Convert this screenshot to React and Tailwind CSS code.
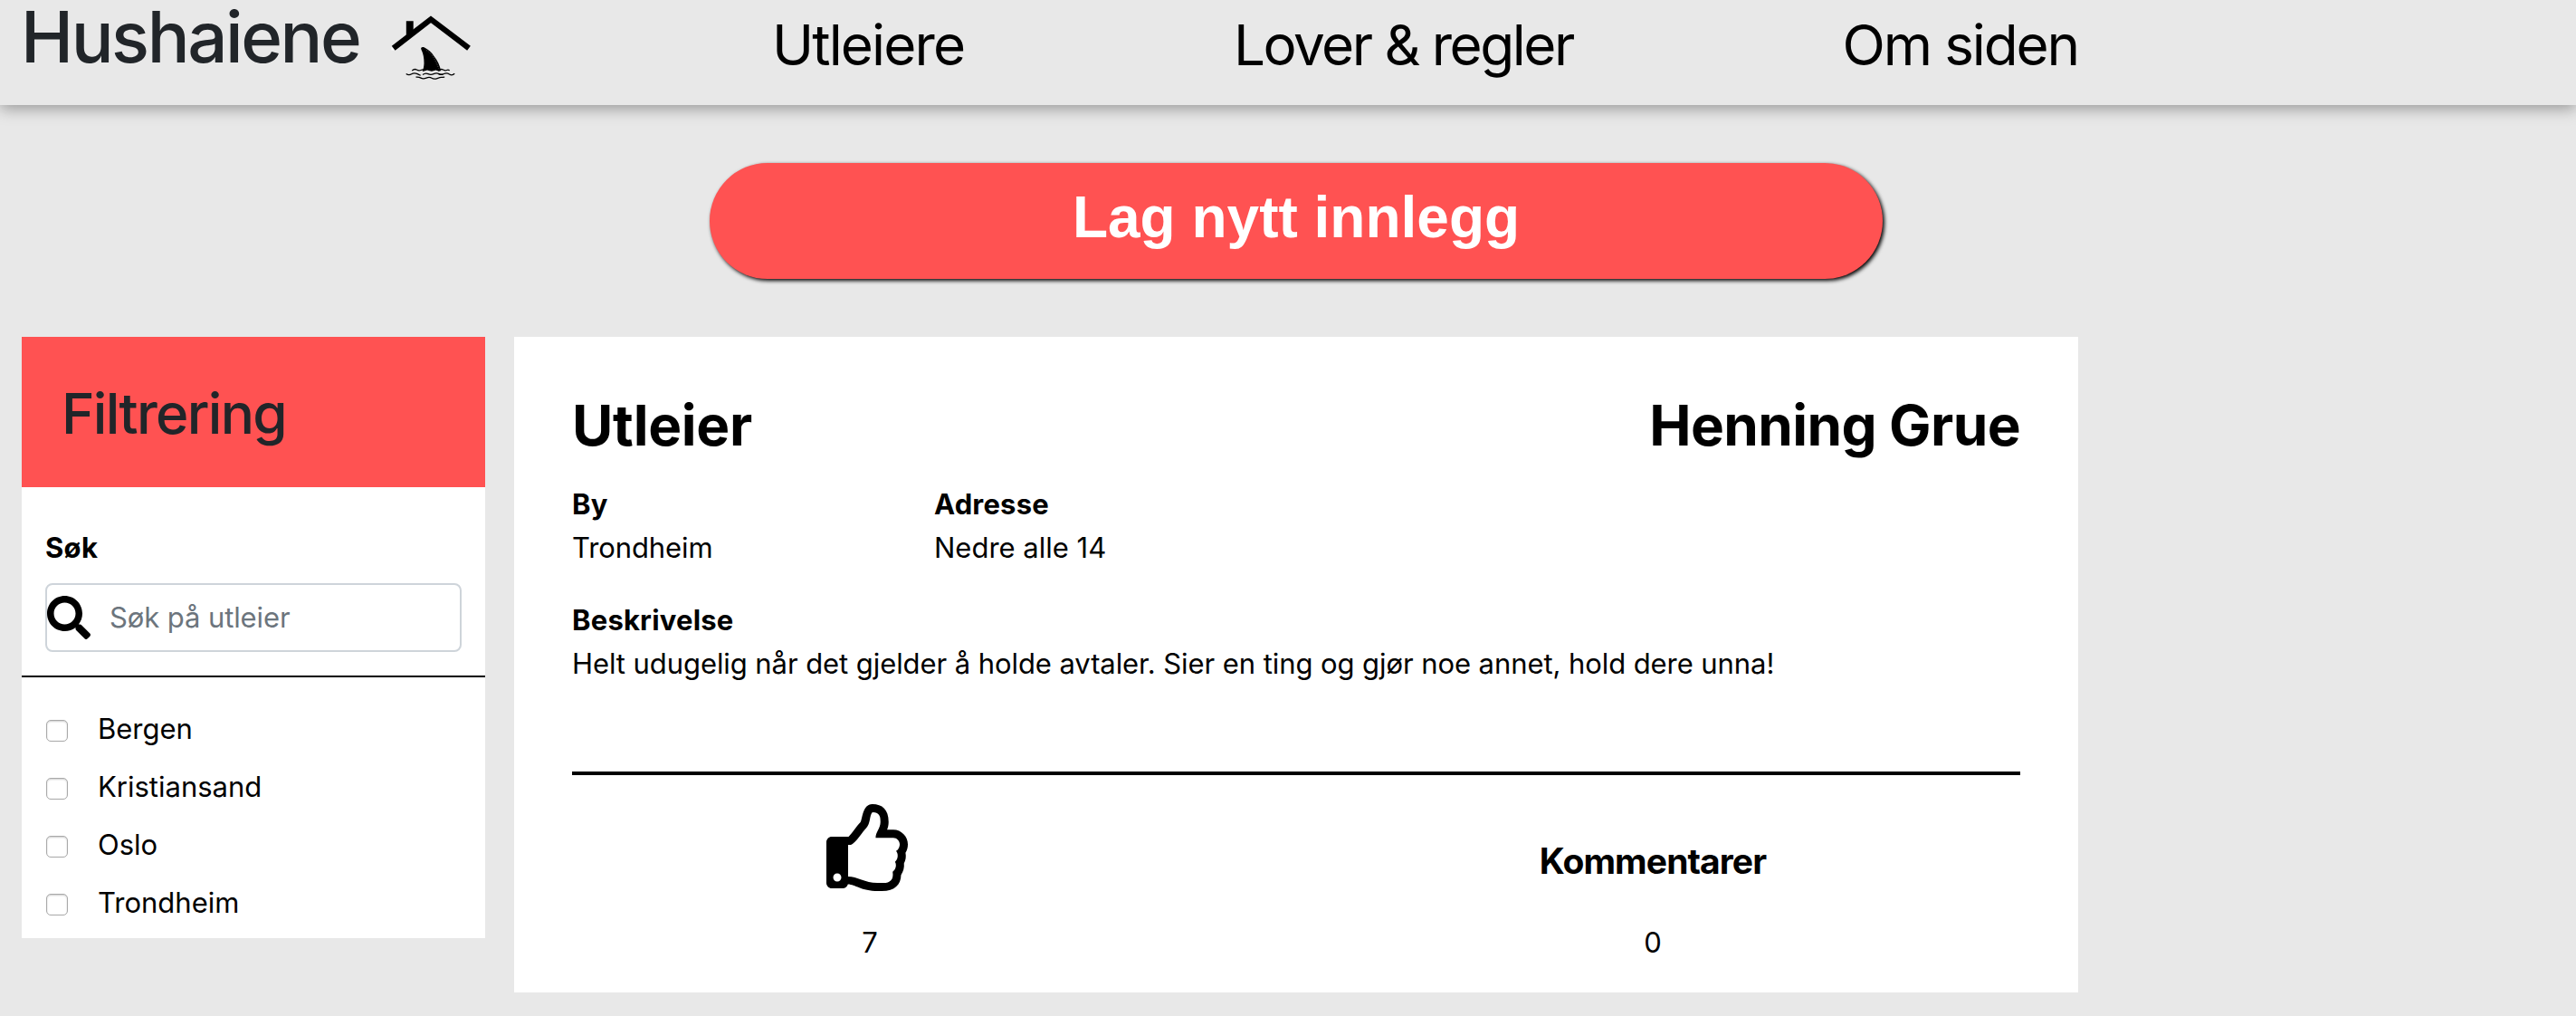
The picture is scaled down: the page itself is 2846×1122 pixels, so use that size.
import { FaRegThumbsUp, FaSearch } from "react-icons/fa";

const cities = ["Bergen", "Kristiansand", "Oslo", "Trondheim"];

function Logo() {
  return (
    <svg width="100" height="92" viewBox="0 0 100 92" fill="none" stroke="#000">
      <path d="M2.500 52l3.500 3.500h-3.500z" fill="#fff" stroke="none" />
      <path d="M4.700 53.300L46 21.400l42 31.900" strokeWidth="6.2" />
      <path d="M18.800 23.300h7.900v14l-7.900 6z" fill="#000" stroke="none" />
      <path
        d="M35.200 53C35.800 52 37.500 51.800 39 52.600C43 54.500 46.500 57.500 49.500 62C53.500 67 56 72.500 57.200 78L55 78.800L51.500 77.600L47 78.800L42 77.600L36.800 79C37.500 76.500 38.400 73.500 38.500 70C38.600 64 37.500 59.500 36 56C35.400 54.800 35 53.800 35.200 53Z"
        fill="#000"
        stroke="none"
      />
      <path d="M41 55.500C46 58 51 65 54.500 75.500" stroke="#777" strokeWidth="0.7" strokeDasharray="1 1.2" />
      <g strokeWidth="1.3">
        <path d="M25.300 78q2.500-2.300 5-1t4.500 .5 3.500-.5" />
        <path d="M54 78q3-2.300 5.500-1t4 .5 3.200 .2" />
        <path d="M18.700 81.500q3 2 6 .2t6.500 0 3.300 .9" />
        <path d="M37 82.600q3-2.200 6-.9t6 0 5.500-.3 5 .9" />
        <path d="M54.500 82q3 1 6-.5t6 .5 5.700-.7" />
        <path d="M29.500 85.200q3-.5 5.500 .9t6 0 6 .2 6 .3 4.500-1.300 3.700-.2" />
      </g>
    </svg>
  );
}

function Field({ label, value, className, valueClassName }) {
  return (
    <div className={className}>
      <div className="font-bold tracking-[0.2px]">{label}</div>
      <div className={valueClassName}>{value}</div>
    </div>
  );
}

export default function App() {
  return (
    <div className="min-h-[1122px] w-full bg-[#e8e8e8] font-['Inter',sans-serif] text-[31px] leading-[48px] text-black">
      <header className="flex h-[116px] items-start pl-6 shadow-[0_4px_16px_rgba(0,0,0,0.35)]">
        <h1 className="w-[406px] text-[78px] leading-[82px] font-medium tracking-[-2.45px] text-[#212529]">
          <span className="-ml-px">Hushaiene</span>
        </h1>
        <Logo />
        <nav className="ml-[323px] flex w-[1443px] justify-between text-[62px] leading-[99px]">
          <a className="tracking-[-1.87px]">Utleiere</a>
          <a className="tracking-[-2.51px]">Lover &amp; regler</a>
          <a className="tracking-[-2.14px]">Om siden</a>
        </nav>
      </header>

      <button className="mt-16 ml-[784px] block h-32 w-[1296px] rounded-full bg-[#ff5252] pb-[9px] font-['Liberation_Sans',Arial,sans-serif] text-[64px] font-bold text-white shadow-[2px_2px_4px_#000]">
        Lag nytt innlegg
      </button>

      <div className="mt-16 ml-6 flex items-start gap-8">
        <aside className="w-[512px] bg-white pb-[15px]">
          <h2 className="h-[166px] bg-[#ff5252] pl-11 text-[62px] leading-[169px] font-medium tracking-[-1.72px] text-[#212529]">
            Filtrering
          </h2>
          <div className="border-b-2 border-black px-[26px] pt-[43px] pb-[26px]">
            <div className="font-bold tracking-[0.3px]">Søk</div>
            <div className="mt-[15px] flex h-[76px] items-center rounded-lg border-2 border-[#ced4da]">
              <FaSearch className="size-12" />
              <span className="ml-[21px] tracking-[-0.1px] text-[#6c757d]">Søk på utleier</span>
            </div>
          </div>
          <ul className="mt-[33px] flex flex-col gap-4 pl-[27px]">
            {cities.map((city) => (
              <li key={city} className="flex items-center">
                <span className="mt-1 mr-[33px] size-6 rounded-[5px] border border-[#a9a9a9] bg-white shadow-[inset_0_1px_2px_rgba(0,0,0,0.2)]" />
                {city}
              </li>
            ))}
          </ul>
        </aside>

        <article className="w-[1728px] bg-white px-16 pt-16 pb-[31px]">
          <div className="flex h-[97px] justify-between text-[62px] leading-[67px] font-bold">
            <h2 className="tracking-[-0.28px]">Utleier</h2>
            <h2 className="tracking-[-0.61px]">Henning Grue</h2>
          </div>
          <div className="flex">
            <Field label="By" value="Trondheim" className="w-[400px]" valueClassName="tracking-[-0.09px]" />
            <Field label="Adresse" value="Nedre alle 14" />
          </div>
          <Field
            className="mt-8"
            label="Beskrivelse"
            value="Helt udugelig når det gjelder å holde avtaler. Sier en ting og gjør noe annet, hold dere unna!"
            valueClassName="tracking-[-0.075px]"
          />
          <div className="mt-[95px] flex justify-between border-t-4 border-black pt-8 text-center">
            <div className="w-[658px]">
              <FaRegThumbsUp className="mx-auto size-24" />
              <div className="mt-[33px]">7</div>
            </div>
            <div className="w-[812px]">
              <div className="h-24 pt-[39px] text-[39px] font-bold tracking-[-0.9px]">Kommentarer</div>
              <div className="mt-[33px]">0</div>
            </div>
          </div>
        </article>
      </div>
    </div>
  );
}
